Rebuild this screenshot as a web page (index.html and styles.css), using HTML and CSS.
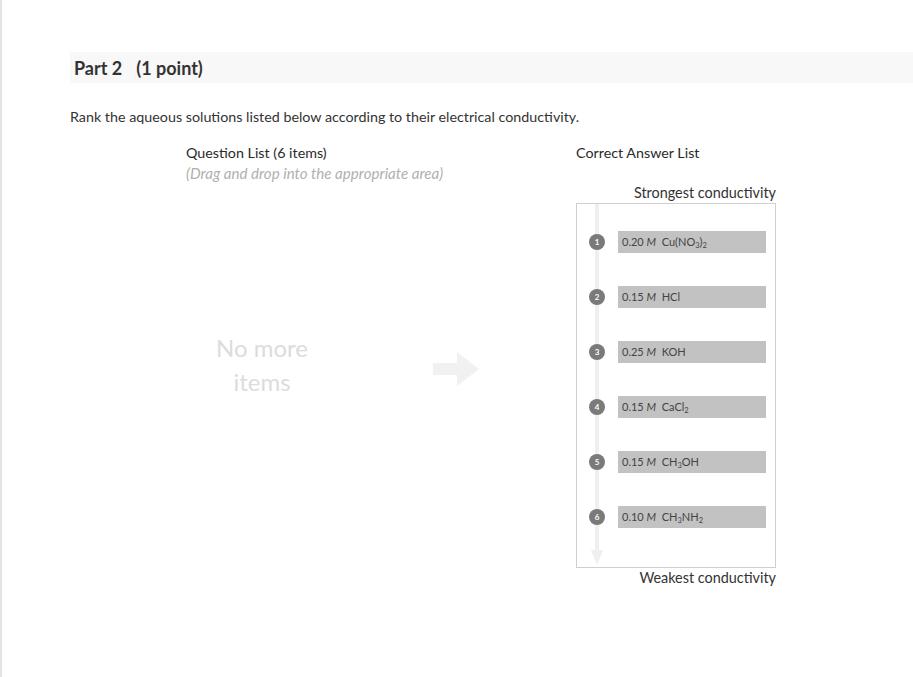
FILE: index.html
```html
<!DOCTYPE html>
<html>
<head>
<meta charset="utf-8">
<link rel="stylesheet" href="styles.css">
</head>
<body>
<div class="page">
  <div class="part-header"><span>Part 2</span><span class="points">(1 point)</span></div>
  <p class="prompt">Rank the aqueous solutions listed below according to their electrical conductivity.</p>
  <div class="columns">
    <div class="question-col">
      <div class="col-title">Question List (6 items)</div>
      <div class="hint">(Drag and drop into the appropriate area)</div>
      <div class="empty-zone">
        <div class="empty-text">No more<br>items</div>
        <svg class="move-arrow" width="46" height="34" viewBox="0 0 46 34"><path d="M0 11 H24 V0 L46 17 L24 34 V23 H0 Z" fill="#f1f1f1"/></svg>
      </div>
    </div>
    <div class="answer-col">
      <div class="col-title">Correct Answer List</div>
      <div class="end-label top">Strongest conductivity</div>
      <div class="rank-box">
        <div class="rank-line"></div>
        <div class="rank-arrow"></div>
        <div class="rank-row"><span class="num">1</span><div class="item">0.20 <i>M</i>&nbsp; Cu(NO<sub>3</sub>)<sub>2</sub></div></div>
        <div class="rank-row"><span class="num">2</span><div class="item">0.15 <i>M</i>&nbsp; HCl</div></div>
        <div class="rank-row"><span class="num">3</span><div class="item">0.25 <i>M</i>&nbsp; KOH</div></div>
        <div class="rank-row"><span class="num">4</span><div class="item">0.15 <i>M</i>&nbsp; CaCl<sub>2</sub></div></div>
        <div class="rank-row"><span class="num">5</span><div class="item">0.15 <i>M</i>&nbsp; CH<sub>3</sub>OH</div></div>
        <div class="rank-row"><span class="num">6</span><div class="item">0.10 <i>M</i>&nbsp; CH<sub>3</sub>NH<sub>2</sub></div></div>
      </div>
      <div class="end-label">Weakest conductivity</div>
    </div>
  </div>
</div>
</body>
</html>
```
FILE: styles.css
```css
html, body {
  margin: 0;
  padding: 0;
  background: #fff;
}
body {
  font-family: Lato, "Open Sans", sans-serif;
  color: #333;
}
.page {
  border-left: 2px solid #e4e4e4;
  min-height: 677px;
  box-sizing: border-box;
  padding-top: 52px;
}
.part-header {
  margin-left: 68px;
  height: 31px;
  background: #f8f8f8;
  display: flex;
  align-items: center;
  gap: 14px;
  padding-left: 4px;
  font-size: 18px;
  font-weight: bold;
  color: #333;
}
.prompt {
  margin: 24px 0 0 68px;
  font-size: 14.3px;
  line-height: 20px;
  color: #333;
}
.columns {
  display: flex;
  margin: 16px 0 0 184px;
}
.question-col {
  width: 390px;
}
.col-title {
  font-size: 14.3px;
  line-height: 20px;
  color: #2a2a2a;
}
.hint {
  font-size: 15.1px;
  line-height: 20px;
  font-style: italic;
  color: #b0b0b0;
}
.empty-zone {
  display: flex;
  align-items: center;
  margin-top: 148px;
}
.empty-text {
  width: 152px;
  text-align: center;
  font-size: 24px;
  line-height: 34px;
  color: #dcdcdc;
}
.move-arrow {
  margin-left: 95px;
  margin-top: 8px;
}
.answer-col {
  width: 200px;
}
.end-label {
  text-align: right;
  font-size: 14.4px;
  line-height: 20px;
  color: #333;
}
.end-label.top {
  margin-top: 20px;
}
.rank-box {
  position: relative;
  border: 1px solid #cfcfcf;
  height: 365px;
  box-sizing: border-box;
  padding: 27px 9px 0 12px;
  display: flex;
  flex-direction: column;
  gap: 33px;
}
.rank-line {
  position: absolute;
  left: 18px;
  top: 0;
  width: 4px;
  height: 350px;
  background: #efefef;
}
.rank-arrow {
  position: absolute;
  left: 14px;
  top: 346px;
  width: 0;
  height: 0;
  border-left: 6px solid transparent;
  border-right: 6px solid transparent;
  border-top: 15px solid #efefef;
}
.rank-row {
  position: relative;
  display: flex;
  align-items: center;
  gap: 13px;
  height: 22px;
}
.num {
  width: 16px;
  height: 16px;
  border-radius: 50%;
  background: #7a7a7a;
  color: #fff;
  font-size: 8px;
  font-weight: bold;
  display: flex;
  align-items: center;
  justify-content: center;
  flex: none;
}
.item {
  flex: 1;
  height: 22px;
  background: #c2c2c2;
  font-size: 11px;
  line-height: 22px;
  padding-left: 4px;
  color: #444;
}
.item i {
  font-style: italic;
}
.item sub {
  font-size: 7.5px;
  vertical-align: -2px;
  line-height: 0;
}
```
